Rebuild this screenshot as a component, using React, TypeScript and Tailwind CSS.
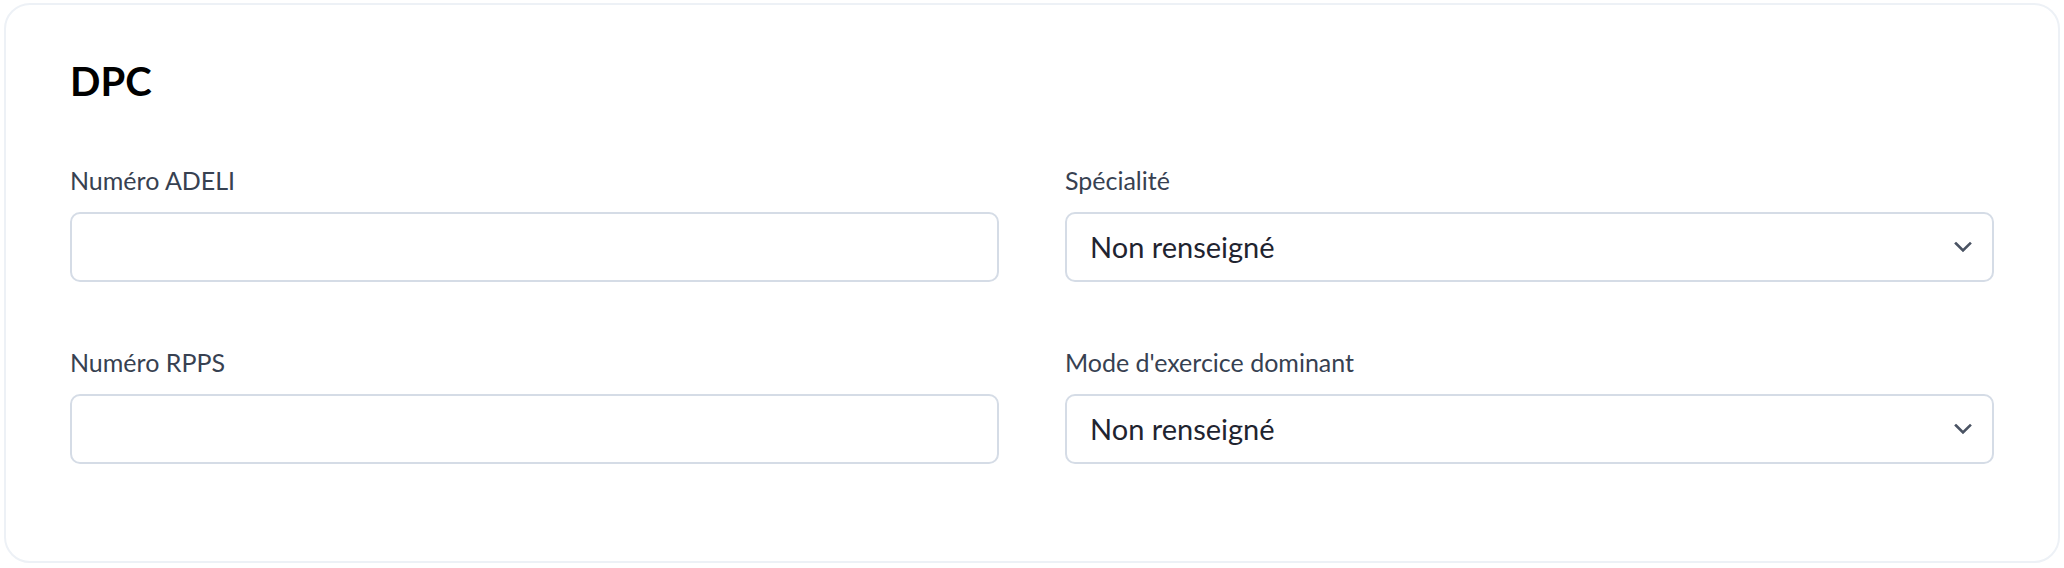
import { useState } from 'react';

const font = { fontFamily: 'Lato, "Noto Sans", "Liberation Sans", sans-serif' };

function Chevron() {
  return (
    <svg
      width="18"
      height="11"
      viewBox="0 0 18 11"
      fill="none"
      className="pointer-events-none absolute right-[22px] top-1/2 -translate-y-1/2"
    >
      <path d="M2 2L9 9L16 2" stroke="#4a5363" strokeWidth="2.6" strokeLinecap="square" />
    </svg>
  );
}

function TextField({ label }: { label: string }) {
  const [value, setValue] = useState('');
  return (
    <div className="flex flex-col gap-[17px]">
      <label className="text-[25px] leading-[30px] text-[#374151]">{label}</label>
      <input
        value={value}
        onChange={(e) => setValue(e.target.value)}
        className="h-[70px] w-full rounded-[10px] border-2 border-[#d5dce6] bg-white px-[23px] text-[29px] text-[#1f2430] outline-none"
      />
    </div>
  );
}

function SelectField({ label }: { label: string }) {
  const [value, setValue] = useState('none');
  return (
    <div className="flex flex-col gap-[17px]">
      <label className="text-[25px] leading-[30px] text-[#374151]">{label}</label>
      <div className="relative">
        <select
          value={value}
          onChange={(e) => setValue(e.target.value)}
          style={font}
          className="h-[70px] w-full appearance-none rounded-[10px] border-2 border-[#d5dce6] bg-white px-[23px] text-[29px] text-[#1f2430] outline-none"
        >
          <option value="none">Non renseigné</option>
        </select>
        <Chevron />
      </div>
    </div>
  );
}

export default function App() {
  return (
    <div className="bg-white px-[4px] pt-[3px]" style={font}>
      <div className="rounded-[26px] border-2 border-[#edf1f6] bg-white px-[64px] pt-[52px] pb-[97px]">
        <h2 className="text-[40px] leading-[48px] font-bold text-black">DPC</h2>
        <div className="mt-[60px] grid grid-cols-2 gap-x-[66px] gap-y-[65px]">
          <TextField label="Numéro ADELI" />
          <SelectField label="Spécialité" />
          <TextField label="Numéro RPPS" />
          <SelectField label="Mode d'exercice dominant" />
        </div>
      </div>
    </div>
  );
}
